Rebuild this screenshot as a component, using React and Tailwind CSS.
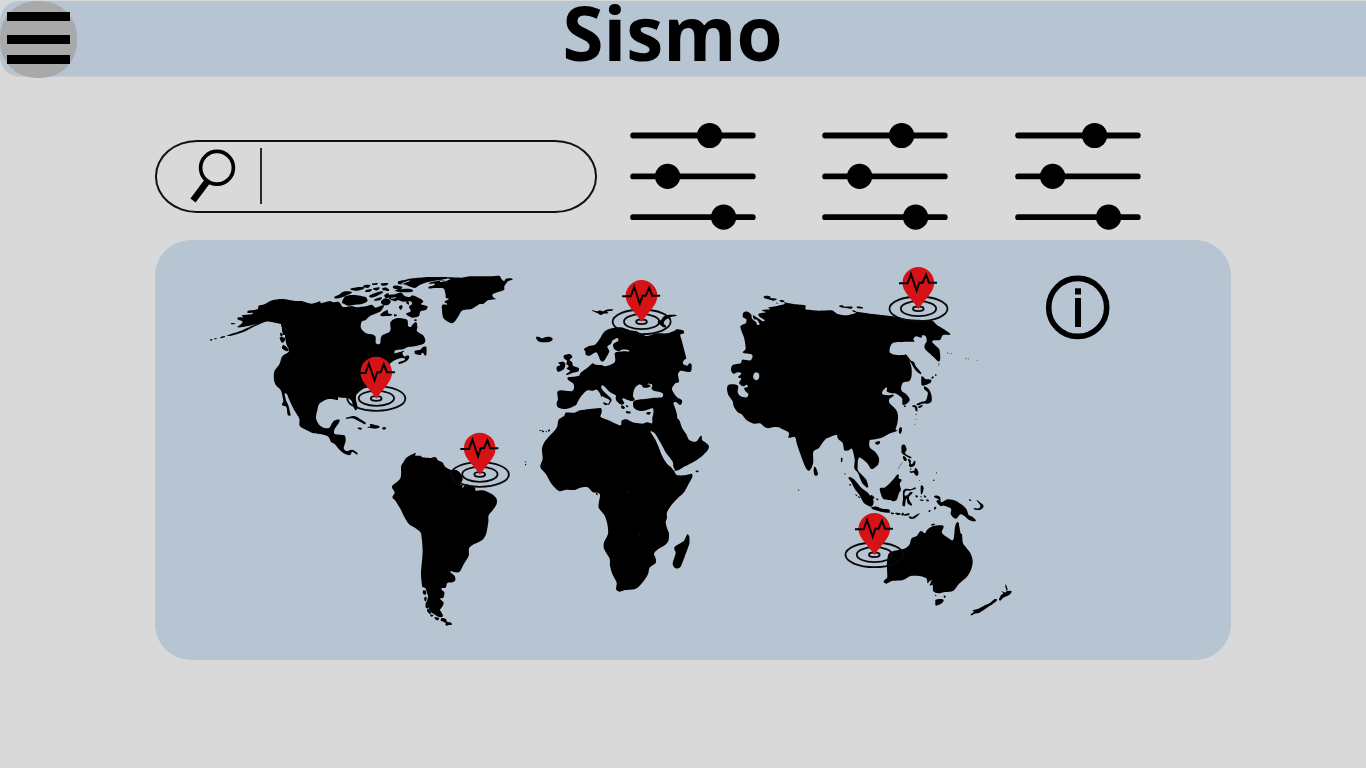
import React from "react";

const pins = [
  { id: "north-america", x: 376.2, y: 398.3 },
  { id: "south-america", x: 479.7, y: 474.3 },
  { id: "europe", x: 641.5, y: 321.7 },
  { id: "siberia", x: 918.3, y: 308.7 },
  { id: "australia", x: 874.3, y: 554.7 },
];

// Rounds closed polygons into curves that still pass through every vertex.
function smooth(d) {
  return d
    .split("Z")
    .filter((part) => part.trim())
    .map((part) => {
      const points = [];
      for (const [, command, values] of part.matchAll(/([MLVH])([^MLVH]*)/g)) {
        const numbers = values.trim().split(/[\s,]+/).map(Number);
        const last = points[points.length - 1];
        if (command === "V") points.push([last[0], numbers[0]]);
        else if (command === "H") points.push([numbers[0], last[1]]);
        else points.push([numbers[0], numbers[1]]);
      }
      const n = points.length;
      const at = (i) => points[(i + n) % n];
      const gap = (a, b) => Math.hypot(a[0] - b[0], a[1] - b[1]) || 1;
      const handle = (i, length, sign) => {
        const before = at(i - 1);
        const after = at(i + 1);
        const span = gap(before, after);
        const reach = Math.min(length, gap(before, at(i)), gap(at(i), after)) * 0.3;
        return [
          at(i)[0] + (sign * reach * (after[0] - before[0])) / span,
          at(i)[1] + (sign * reach * (after[1] - before[1])) / span,
        ];
      };
      let out = `M${points[0].join(" ")}`;
      for (let i = 0; i < n; i += 1) {
        const length = gap(at(i), at(i + 1));
        const a = handle(i, length, 1).map((v) => v.toFixed(1));
        const b = handle(i + 1, length, -1).map((v) => v.toFixed(1));
        out += `C${a.join(" ")} ${b.join(" ")} ${at(i + 1).join(" ")}`;
      }
      return `${out}Z`;
    })
    .join("");
}

function Land({ d, fill = "#000" }) {
  return <path d={smooth(d)} fill={fill} />;
}

function MenuButton() {
  return (
    <button aria-label="Menu" className="flex h-[77px] w-[77px] shrink-0 flex-col rounded-[36px] bg-[#a9a9a9] pl-[7px] pt-[11px]">
      <span className="h-[9px] w-[63px] bg-black" />
      <span className="mt-[13.5px] h-[9px] w-[63px] bg-black" />
      <span className="mt-[11px] h-[9px] w-[63px] bg-black" />
    </button>
  );
}

function SearchBox() {
  return (
    <div className="mt-[30px] flex h-[73px] w-[442px] shrink-0 items-start rounded-[42px/36px] border-2 border-[#101010]">
      <svg className="ml-[32px] mt-[6px] h-[56px] w-[48px] shrink-0" viewBox="189 148 48 56" fill="none" stroke="#000">
        <circle cx="217" cy="167.8" r="16.4" strokeWidth="3.7" />
        <path d="M207.2 181.5L193 200.5" strokeWidth="6.4" />
      </svg>
      <span className="ml-[23px] mt-[6px] h-[56px] w-[2px] bg-[#2a2a2a]" />
      <input aria-label="Buscar" className="h-full w-[300px] bg-transparent px-3 text-2xl outline-none" />
    </div>
  );
}

function Sliders() {
  return (
    <svg className="h-[110px] w-[126px] shrink-0" viewBox="630.5 121 126 110">
      <g stroke="#000" strokeWidth="5.8" strokeLinecap="round">
        <path d="M633.6 135.5H753.3M633.6 176.4H753.3M633.6 217.2H753.3" />
      </g>
      <circle cx="710.1" cy="135.5" r="12.6" />
      <circle cx="668.1" cy="176.4" r="12.6" />
      <circle cx="724.1" cy="217.2" r="12.6" />
    </svg>
  );
}

function Pin({ x, y }) {
  return (
    <g transform={`translate(${x} ${y}) scale(0.33333)`}>
      <g fill="none" stroke="#080808" strokeWidth="5.5">
        <ellipse cx="0.5" cy="0.5" rx="87" ry="37" />
        <ellipse cx="0.5" cy="0" rx="53" ry="22.5" />
        <ellipse cx="0" cy="0.5" rx="16" ry="7" />
      </g>
      <path fill="#d61216" d="M-47.5 -77A47.5 48 0 0 1 47.5 -77C47 -51 27 -37 0.5 1C-26 -37 -47 -51 -47.5 -77Z" />
      <path fill="none" stroke="#000" strokeWidth="6" d="M-58 -76H-32L-22 -104L-5 -54L3 -78H13L23 -102L32 -78H56" />
    </g>
  );
}

function NorthAmerica() {
  return (
    <g transform="translate(205 265) scale(0.33333)">
      <Land d="M97 160L114 157L110 151L140 148L143 143L128 144L129 137L158 133L161 122L178 118L202 106L232 102L270 108L290 108L320 116L345 109L348 115L374 108L385 112L402 111L414 126L440 123L455 127L482 124L500 119L512 128L534 120L537 124L528 138L515 145L495 153L482 165L470 170L467 185L471 194L484 205L505 209L512 216L512 233L519 238L526 234L530 213L552 202L557 192L556 173L566 163L580 159L606 164L609 182L617 186L632 171L637 186L636 199L656 213L660 232L640 244L609 246L595 253L569 260L598 257L592 265L600 276L612 279L600 291L580 295L600 283L580 281L556 295L550 320L525 342L500 360L475 371L455 388L453 404L458 427L451 436L443 418L440 408L430 400L410 398L400 397L398 405L370 402L343 416L337 436L333 460L343 480L358 489L373 488L386 468L403 464L400 476L389 492L389 507L418 511L422 527L416 550L424 558L442 554L457 563L456 569L442 561L434 571L415 564L402 553L389 537L378 531L370 515L350 508L325 505L300 493L284 482L283 461L268 436L254 407L246 388L239 386L243 405L250 421L257 451L248 449L244 426L231 420L235 408L228 377L213 361L207 345L208 319L224 296L231 275L250 262L252 253L245 240L240 212L242 191L229 185L228 178L204 172L182 170L151 183L115 201L76 213L66 211L108 197L140 183L154 178L126 184L98 187L109 177L112 169Z" />
      <Land d="M46 217L60 214L48 220ZM15 223L23 224L17 227ZM28 220L36 221L30 223ZM78 174L91 176L81 178ZM236 240L252 254L245 259L231 250ZM231 185L242 191L242 208L234 209ZM226 204L233 210L228 215ZM224 218L232 216L241 222L232 233ZM388 98L402 89L415 80L440 81L427 90L405 99ZM411 112L421 94L447 90L482 96L487 109L471 117L450 119L430 122L418 117ZM436 71L462 66L478 69L458 77L441 76ZM474 63L495 60L488 69ZM501 56L518 54L515 59L503 60ZM528 55L549 54L545 61L531 62ZM483 75L501 73L495 80L481 81ZM505 70L523 67L518 76L507 75ZM532 70L545 68L552 77L535 76ZM563 66L580 62L592 68L579 74ZM570 76L602 71L624 77L604 82L578 80ZM492 93L510 84L534 80L520 91L501 98ZM507 105L530 97L524 106ZM538 91L550 85L551 97L543 99ZM528 113L541 100L557 109L545 121ZM551 91L570 88L588 83L600 94L615 96L623 91L643 100L655 109L648 118L667 124L663 135L647 139L641 154L622 158L607 151L604 145L617 139L612 125L621 118L617 109L594 110L578 105L571 109L554 103ZM580 49L602 44L625 40L670 36L725 36L727 41L690 47L665 52L643 61L630 69L610 63L596 58L580 57ZM526 150L547 135L550 145L562 150L545 153ZM582 125L592 122L588 134ZM603 112L610 109L611 119ZM568 148L576 151L568 154ZM627 166L634 163L634 168ZM630 257L646 254L653 247L664 246L663 272L653 263L646 270L630 266ZM600 275L612 272L610 280ZM422 459L446 453L462 460L482 473L480 478L459 467L442 460L426 462ZM487 487L496 484L495 477L511 480L524 486L508 491ZM458 489L470 489L468 494ZM533 488L543 489L536 494Z" />
      <Land d="M670 68L690 58L671 55L700 47L735 44L725 37L770 38L795 34L853 34L883 32L889 41L897 48L903 41L923 42L909 49L898 64L897 75L873 83L862 89L866 98L873 102L849 106L835 117L824 117L810 126L799 132L771 137L760 154L744 174L724 167L714 157L711 135L712 120L727 118L718 111L731 102L723 99L721 85L715 70L690 69Z" />
      <g fill="none" stroke="#b7c4d2" strokeWidth="3">
        <path d="M567 264L590 257L622 247L655 239M594 268L609 266L616 276M614 47L590 56M705 50L727 46M558 100L573 98" />
      </g>
    </g>
  );
}

function SouthAmerica() {
  return (
    <g transform="translate(380 425) scale(0.33333)">
      <Land d="M70 112L79 98L94 89L107 84L106 92L121 92L127 97L150 99L166 96L174 106L187 112L196 126L214 135L231 136L244 149L248 165L239 181L246 190L260 178L285 188L287 197L309 196L335 207L349 220L350 237L338 256L326 271L325 291L319 325L308 344L279 359L267 370L266 393L252 416L239 440L225 442L213 438L211 442L224 453L226 465L218 472L202 474L197 488L184 491L193 502L190 518L180 521L191 533L184 549L180 554L189 573L177 576L156 563L147 552L141 530L144 514L136 489L127 486L123 445L128 378L123 325L109 311L89 299L76 281L61 251L46 227L37 217L44 202L36 184L61 160L63 125Z" />
      <Land d="M129 497L138 499L137 509L130 507ZM134 516L140 518L138 529L133 526ZM138 531L145 535L144 550L137 547ZM144 551L154 562L149 567L141 557ZM151 569L160 571L154 575ZM164 577L177 580L171 586ZM185 579L198 582L201 590L214 593L214 600L202 597L192 591L183 589ZM196 596L207 599L200 602ZM236 183L247 181L244 190ZM7 8L17 7L14 13L8 12Z" />
    </g>
  );
}

function Europe() {
  return (
    <g transform="translate(520 270) scale(0.33333)">
      <Land d="M192 237L207 228L225 224L239 207L253 185L275 175L303 172L330 181L350 184L380 198L410 190L440 190L464 182L470 178L489 181L492 190L481 194L485 210L490 230L499 265L492 270L489 281L502 287L508 280L515 284L514 302L507 306L482 302L474 313L477 335L466 340L456 358L471 382L486 391L481 405L468 396L460 400L468 455L400 455L402 417L378 421L360 423L342 414L340 395L354 389L375 387L398 384L426 382L429 371L416 365L401 362L394 355L397 347L384 341L381 352L364 352L360 343L347 351L341 363L339 379L344 389L335 393L320 389L307 386L313 399L302 403L288 390L287 376L269 366L256 352L246 346L245 356L257 370L270 382L275 390L265 405L269 391L248 379L231 359L219 362L203 361L190 371L182 380L174 394L168 405L149 414L130 417L113 411L110 399L114 388L112 366L122 361L155 364L162 355L160 341L142 325L162 320L177 317L182 308L206 290L218 280L226 284L244 285L256 289L275 283L284 277L286 268L284 251L290 246L310 244L328 242L306 239L294 243L282 236L280 222L295 212L292 204L278 211L273 221L262 230L268 244L258 264L249 275L241 271L236 259L228 247L210 257L198 255L196 244Z" />
      <Land d="M48 202L58 201L65 205L82 200L96 203L97 211L87 216L69 217L55 214ZM131 257L143 253L151 253L157 261L149 270L156 276L160 288L176 294L175 304L157 309L139 314L150 303L140 296L146 289L139 281L141 272L134 267ZM110 291L121 285L115 278L130 275L136 282L132 297L114 305ZM216 120L232 124L240 121L247 124L260 119L280 118L275 123L261 124L265 130L250 131L242 135L233 130L219 124ZM413 156L424 149L430 140L443 135L470 136L453 141L439 148L431 160L439 170L429 171ZM241 371L248 366L246 380ZM287 382L295 379L306 388L311 401L302 403L292 393ZM318 425L331 425L331 430L319 429ZM379 429L391 427L387 434ZM305 407L315 413L307 416ZM318 405L325 409L321 412ZM250 397L264 403L253 404Z" />
      <Land fill="#b7c4d2" d="M356 350L362 344L381 353L394 342L395 352L380 356L363 355Z" />
      <Land d="M367 351L372 345L388 344L391 350L377 353Z" />
    </g>
  );
}

function AfricaAndArabia() {
  return (
    <g transform="translate(520 400) scale(0.33333)">
      <Land d="M137 38L163 38L180 31L209 27L242 24L245 37L242 51L266 61L284 70L302 76L305 62L320 58L338 67L366 71L386 68L394 96L412 126L425 164L441 191L460 207L469 224L493 226L515 221L517 231L507 250L492 277L474 294L454 316L441 337L441 354L437 366L441 385L447 401L445 423L434 436L414 448L402 461L407 475L407 489L389 503L384 523L368 547L348 566L315 570L298 575L288 568L290 548L277 522L270 497L269 476L252 446L252 427L264 401L262 372L254 347L236 323L237 305L239 282L219 277L203 262L181 263L163 270L139 269L117 273L95 252L79 224L61 201L68 177L66 145L77 121L106 89L112 79L116 59L133 47Z" />
      <Land d="M400 15L451 10L459 22L466 34L465 48L478 61L486 83L499 103L507 119L528 125L543 107L547 121L567 140L549 166L527 182L495 199L465 212L458 185L438 158L422 129L404 99L389 94L387 79L396 69L401 49L400 26Z" />
      <Land d="M502 403L508 410L508 431L495 467L482 500L467 505L458 491L467 460L463 443L475 433L492 422ZM385 69L390 93L404 95L406 82ZM527 212L536 213L531 217ZM58 90L64 90L64 92L58 92ZM66 92L72 94L68 97ZM76 93L80 94L80 97ZM84 90L90 89L87 95ZM14 184L18 185L18 188ZM15 192L19 194L16 196ZM228 280L233 281L231 286ZM379 39L391 36L388 43ZM305 17L313 22L307 26ZM319 34L331 38L322 40Z" />
      <path stroke="#b7c4d2" strokeWidth="5" fill="none" d="M393 94L409 119L423 151L435 178L453 195L463 211" />
      <g fill="#65717c">
        <rect x="324" y="276" width="2" height="2" /><rect x="357" y="402" width="2" height="2" /><rect x="390" y="280" width="3" height="1" />
      </g>
    </g>
  );
}

function Asia() {
  return (
    <g>
      <g transform="translate(720 260) scale(0.33333)">
        <Land d="M70 158L83 155L94 164L96 176L108 186L112 195L119 192L111 179L101 176L100 166L128 184L134 180L115 164L137 157L126 151L151 148L144 143L174 137L195 132L192 127L220 132L256 136L257 148L295 152L335 151L351 161L378 166L405 160L410 155L465 163L518 169L565 178L636 182L652 196L691 222L669 225L660 240L637 243L647 257L658 268L659 303L640 290L615 267L614 255L620 244L618 230L608 225L604 233L588 229L580 237L583 245L520 248L509 276L531 285L557 286L568 302L575 326L574 352L567 364L548 369L544 391L559 403L569 421L550 435L546 415L530 402L518 400L501 395L500 382L486 400L505 406L521 405L508 417L509 430L530 452L534 476L526 508L505 522L480 535L430 541L350 524L325 533L300 538L230 538L223 530L206 533L207 519L187 505L164 501L140 504L120 490L101 491L80 481L65 463L53 457L41 439L38 424L25 405L21 386L25 375L38 373L54 378L53 397L62 409L80 412L85 402L76 393L73 384L83 381L80 374L69 379L57 369L64 357L54 351L64 341L53 337L40 341L33 329L38 315L62 310L67 299L92 301L96 284L69 278L77 266L73 236L61 200L77 190L79 178L69 172Z" />
        <Land fill="#b7c4d2" d="M101 343L108 337L117 342L117 354L109 361L100 354Z" />
        <Land d="M554 284L573 302L582 306L587 318L604 341L588 332L571 306ZM131 110L150 109L152 114L170 117L160 122L146 118ZM179 121L193 122L187 127ZM168 129L173 129L173 131ZM357 139L367 136L373 140L397 140L395 146L370 143ZM410 140L429 143L414 145ZM397 151L408 154L403 157ZM605 349L616 357L633 359L632 368L616 375L605 376ZM613 379L626 387L634 404L635 423L624 431L608 431L590 435L603 426L617 422L622 409L623 397L613 388ZM581 435L591 440L592 454L587 452L584 442L577 440ZM596 439L608 435L604 442L596 444ZM636 350L642 352L635 356ZM645 343L650 344L647 348ZM654 310L658 311L658 314ZM552 437L558 438L553 441ZM537 507L543 501L546 510L542 521L537 518Z" />
        <g fill="#3b4248">
          <rect x="681" y="277" width="3" height="3" /><rect x="686" y="279" width="2" height="2" /><rect x="692" y="279" width="4" height="2" />
          <rect x="736" y="293" width="2" height="3" /><rect x="739" y="295" width="2" height="3" /><rect x="744" y="296" width="3" height="2" />
          <rect x="770" y="300" width="3" height="2" /><rect x="586" y="462" width="3" height="2" /><rect x="587" y="477" width="2" height="3" />
          <rect x="583" y="492" width="3" height="2" /><rect x="654" y="315" width="3" height="2" />
          <rect x="351" y="313" width="2" height="1" /><rect x="366" y="311" width="2" height="1" /><rect x="198" y="304" width="2" height="1" />
        </g>
      </g>
      <g transform="translate(720 400) scale(0.33333)">
        <Land d="M180 80L205 95L218 107L227 110L230 130L245 173L258 205L267 212L276 200L280 185L280 155L296 145L318 116L348 103L354 116L368 129L373 151L386 151L396 146L404 177L403 205L414 219L426 248L441 263L445 259L438 238L415 213L413 196L417 173L432 181L445 194L455 207L474 194L477 175L466 156L449 142L449 121L458 111L480 113L505 102L530 90L400 40Z" />
        <Land d="M465 128L478 123L480 130L471 134ZM285 200L294 220L291 227L284 226L281 214ZM363 174L368 176L366 186L363 186ZM386 232L401 237L424 263L442 277L460 300L459 315L451 320L431 308L417 283L404 266L394 246ZM407 282L412 288L408 287ZM414 289L421 293L417 294ZM388 252L394 255L390 257ZM453 285L464 294L456 296ZM469 296L475 297L472 301ZM454 322L471 320L486 326L506 328L509 338L485 336L458 328ZM513 338L523 340L516 343ZM526 339L542 341L533 345ZM544 342L551 339L549 347ZM553 343L568 340L566 346L553 347ZM567 349L578 353L572 357ZM577 352L598 340L590 350L579 357ZM480 265L493 263L508 251L521 237L531 224L537 225L536 235L545 240L539 251L543 269L537 279L530 300L519 304L511 300L490 297L482 280ZM549 273L558 266L573 268L585 262L587 267L570 272L557 273L554 286L563 285L570 277L578 278L567 291L569 302L576 316L563 310L559 296L555 318L547 316L549 297ZM545 137L554 134L560 149L555 160L567 168L575 173L568 174L554 166L545 158ZM550 168L561 179L554 183ZM564 178L572 181L575 193L584 182L585 194L576 201L567 199L568 190ZM569 214L582 212L587 203L595 216L591 228L581 218L573 219ZM549 184L534 208L546 190ZM604 256L611 264L605 283L602 269ZM587 286L594 289L588 292ZM600 290L606 290L606 292ZM612 286L619 291L613 292ZM599 299L611 300L605 303ZM621 298L627 303L619 303ZM642 290L654 287L661 293L664 307L683 298L707 302L724 313L739 327L746 345L757 350L767 363L748 360L732 347L721 343L709 356L699 352L692 341L693 326L673 317L661 318L649 304L656 298ZM747 298L754 301L750 303ZM770 301L780 307L791 319L779 330L762 328L763 324L777 325L781 316ZM644 321L649 323L643 329ZM628 330L632 333L626 336Z" />
        <Land d="M493 541L502 532L501 486L510 457L553 446L568 434L575 415L591 407L602 393L615 400L619 392L633 381L657 376L671 379L666 399L688 416L699 420L703 402L705 381L713 366L718 380L722 400L726 403L729 430L739 443L751 459L758 482L754 507L741 530L717 551L700 572L676 576L655 580L640 574L638 555L629 557L633 544L623 550L620 536L602 529L572 528L549 540L516 543L499 551L491 546ZM646 606L647 599L660 597L671 600L665 610L648 617ZM671 587L677 589L674 594ZM645 585L649 586L648 589ZM757 631L775 626L792 617L808 610L824 597L832 600L818 612L801 623L778 638L764 641L752 645L762 635ZM856 554L863 568L861 573L875 574L866 586L850 593L841 602L837 598L843 585L850 580L844 574L859 576ZM633 374L645 372L638 377Z" />
        <g fill="#222">
          <rect x="234" y="269" width="4" height="3" /><rect x="373" y="220" width="4" height="3" /><rect x="589" y="42" width="2" height="3" /><rect x="639" y="239" width="4" height="4" /><rect x="648" y="217" width="3" height="3" /><rect x="597" y="240" width="3" height="2" /><rect x="570" y="205" width="4" height="4" />
        </g>
        <path fill="none" stroke="#b7c4d2" strokeWidth="2" d="M622 557L627 545L637 541" />
      </g>
    </g>
  );
}

function WorldMap() {
  return (
    <svg className="h-[420px] w-[885px] shrink-0" viewBox="155 240 885 420" role="img" aria-label="Mapa">
      <NorthAmerica />
      <SouthAmerica />
      <Europe />
      <AfricaAndArabia />
      <Asia />
      {pins.map((pin) => (
        <Pin key={pin.id} x={pin.x} y={pin.y} />
      ))}
    </svg>
  );
}

function InfoButton() {
  return (
    <button aria-label="Info" className="ml-[5px] mt-[35px] h-[66px] w-[66px] shrink-0">
      <svg className="block h-full w-full" viewBox="1045 275 66 66">
        <circle cx="1077.7" cy="307.4" r="29" fill="none" stroke="#000" strokeWidth="5.6" />
        <rect x="1075" y="288.3" width="6" height="6.2" />
        <rect x="1075" y="298" width="6" height="29" />
      </svg>
    </button>
  );
}

export default function App() {
  return (
    <div className="flex h-[768px] w-full flex-col bg-[#d9d9d9] pt-px">
      <header className="flex h-[76px] shrink-0 items-start rounded-l-[20px] border-b border-[#c6cdd5] bg-[#b7c4d2]">
        <MenuButton />
        <h1 className="ml-[485.5px] text-[74.5px] font-bold leading-[62px] text-black [font-family:'Open_Sans',sans-serif]">Sismo</h1>
      </header>
      <main className="flex flex-col pl-[155px] pt-[33px]">
        <div className="flex h-[130px] items-start">
          <SearchBox />
          <div className="ml-[33.2px] mt-[11px] flex gap-[66.2px]">
            <Sliders />
            <Sliders />
            <Sliders />
          </div>
        </div>
        <section className="flex h-[420px] w-[1076px] items-start overflow-hidden rounded-[36px] bg-[#b7c4d2]">
          <WorldMap />
          <InfoButton />
        </section>
      </main>
    </div>
  );
}
